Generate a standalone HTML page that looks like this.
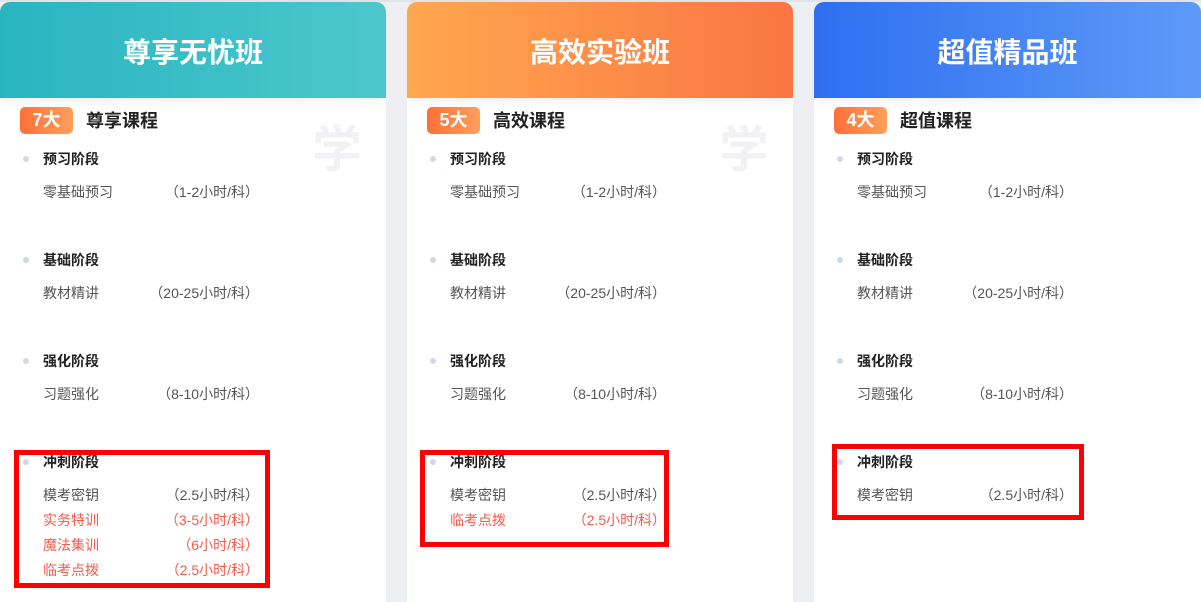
<!DOCTYPE html>
<html><head><meta charset="utf-8"><style>
*{margin:0;padding:0;box-sizing:border-box}
body{width:1201px;height:589px;overflow:hidden;background:#eeeff3;font-family:"Liberation Sans","Noto Sans CJK SC",sans-serif;position:relative}
.top{position:absolute;left:0;top:0;width:1201px;height:2px;background:#e2e3e7}
.card{position:absolute;top:2px;width:386px;height:600px;background:#fff;border-radius:10px 10px 0 0;overflow:hidden}
.hd{height:96px;color:#fff;font-size:28px;font-weight:bold;text-align:center;line-height:102px;box-shadow:0 4px 10px rgba(0,0,0,0.06);position:relative}
.badge{position:absolute;left:20px;top:105px;width:53px;height:27px;border-radius:5px;background:linear-gradient(90deg,#ff6f3a,#ffa05a);color:#fff;font-weight:bold;font-size:18px;text-align:center;line-height:27px}
.ct{position:absolute;left:86px;top:106px;font-size:18px;font-weight:bold;color:#222;line-height:26px}
.wm{position:absolute;left:312px;top:108px;font-size:50px;font-weight:bold;color:#f2f2f4}
.st{position:absolute;left:43px;font-size:14px;font-weight:bold;color:#222;line-height:16px}
.st:before{content:"";position:absolute;left:-20px;top:5px;width:6px;height:6px;border-radius:3px;background:#cfd8e8}
.it{position:absolute;left:43px;width:216px;font-size:14px;color:#555;line-height:16px}
.it span{position:absolute;right:0;top:0}
.r{color:#f55a4a}
.box{position:absolute;border:5px solid #ff0000}
</style></head><body>
<div class="top"></div>

<div class="card" style="left:0">
<div class="hd" style="background:linear-gradient(90deg,#29b5c0,#4cc7cd)">尊享无忧班</div>
<div class="badge">7大</div><div class="ct">尊享课程</div><div class="wm">学</div>
<div class="st" style="top:149px">预习阶段</div>
<div class="it" style="top:182px">零基础预习<span>（1-2小时/科）</span></div>
<div class="st" style="top:250px">基础阶段</div>
<div class="it" style="top:283px">教材精讲<span>（20-25小时/科）</span></div>
<div class="st" style="top:351px">强化阶段</div>
<div class="it" style="top:384px">习题强化<span>（8-10小时/科）</span></div>
<div class="st" style="top:452px">冲刺阶段</div>
<div class="it" style="top:485px">模考密钥<span>（2.5小时/科）</span></div>
<div class="it r" style="top:510px">实务特训<span>（3-5小时/科）</span></div>
<div class="it r" style="top:535px">魔法集训<span>（6小时/科）</span></div>
<div class="it r" style="top:560px">临考点拨<span>（2.5小时/科）</span></div>
</div>

<div class="card" style="left:407px">
<div class="hd" style="background:linear-gradient(90deg,#ffa74e,#fb7543)">高效实验班</div>
<div class="badge">5大</div><div class="ct">高效课程</div><div class="wm">学</div>
<div class="st" style="top:149px">预习阶段</div>
<div class="it" style="top:182px">零基础预习<span>（1-2小时/科）</span></div>
<div class="st" style="top:250px">基础阶段</div>
<div class="it" style="top:283px">教材精讲<span>（20-25小时/科）</span></div>
<div class="st" style="top:351px">强化阶段</div>
<div class="it" style="top:384px">习题强化<span>（8-10小时/科）</span></div>
<div class="st" style="top:452px">冲刺阶段</div>
<div class="it" style="top:485px">模考密钥<span>（2.5小时/科）</span></div>
<div class="it r" style="top:510px">临考点拨<span>（2.5小时/科）</span></div>
</div>

<div class="card" style="left:814px;width:387px">
<div class="hd" style="background:linear-gradient(90deg,#2f6ef0,#5d9bf7)">超值精品班</div>
<div class="badge">4大</div><div class="ct">超值课程</div>
<div class="st" style="top:149px">预习阶段</div>
<div class="it" style="top:182px">零基础预习<span>（1-2小时/科）</span></div>
<div class="st" style="top:250px">基础阶段</div>
<div class="it" style="top:283px">教材精讲<span>（20-25小时/科）</span></div>
<div class="st" style="top:351px">强化阶段</div>
<div class="it" style="top:384px">习题强化<span>（8-10小时/科）</span></div>
<div class="st" style="top:452px">冲刺阶段</div>
<div class="it" style="top:485px">模考密钥<span>（2.5小时/科）</span></div>
</div>

<div class="box" style="left:14px;top:450px;width:256px;height:138px"></div>
<div class="box" style="left:420px;top:450px;width:249px;height:97px"></div>
<div class="box" style="left:832px;top:444px;width:252px;height:76px"></div>
</body></html>
